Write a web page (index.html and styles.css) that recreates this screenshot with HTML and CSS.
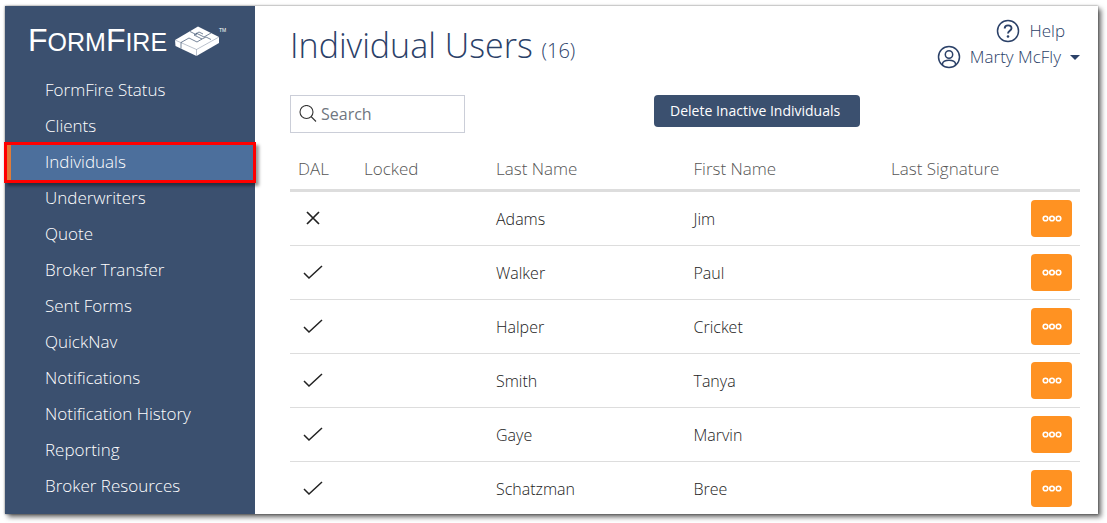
FILE: index.html
```html
<!DOCTYPE html>
<html lang="en">
<head>
  <meta charset="UTF-8">
  <title>FormFire - Individual Users</title>
  <meta name="viewport" content="width=device-width, initial-scale=1.0">
  <link rel="stylesheet" href="styles.css">
</head>
<body>

  <!-- Shared icons -->
  <svg class="sprite" aria-hidden="true">
    <symbol id="check" viewBox="0 0 20 16">
      <path d="M1 8l5 5L19 1" fill="none" stroke="currentColor" stroke-width="1.5"/>
    </symbol>
    <symbol id="cross" viewBox="0 0 20 16">
      <path d="M4 1l12 12M16 1L4 13" fill="none" stroke="currentColor" stroke-width="1.7"/>
    </symbol>
    <symbol id="dots" viewBox="0 0 20 8">
      <g fill="none" stroke="currentColor" stroke-width="1.6">
        <circle cx="3.5" cy="3.5" r="2.3"/>
        <circle cx="10" cy="3.5" r="2.3"/>
        <circle cx="16.5" cy="3.5" r="2.3"/>
      </g>
    </symbol>
  </svg>

  <div class="app">
    <!-- Sidebar -->
    <aside class="sidebar">
      <a class="logo" href="#">
        <span class="logo-text"><b>F</b>ORM<b>F</b>IRE</span>
        <svg class="logo-mark" viewBox="0 0 44 31" aria-hidden="true">
          <path d="M0 14L23 .5 44 11v6L21.500 30 .5 20z" fill="#fff"/>
          <g fill="none" stroke="#3b506f" stroke-width="0.700">
            <path d="M0 14l21.500 9.500L44 11M21.500 23.500V30" opacity="0.500"/>
            <path d="M6 16.500l8-4.500 8 4 5-3-8-4 5-3 4 2M6 16.500v6M36 7l-7 4-8-4M15 5.500l7 3.500M27 13l4-2 5 2.500"/>
          </g>
        </svg>
        <span class="tm">TM</span>
      </a>
      <nav class="nav">
        <a href="#">FormFire Status</a>
        <a href="#">Clients</a>
        <a class="active" href="#">Individuals</a>
        <a href="#">Underwriters</a>
        <a href="#">Quote</a>
        <a href="#">Broker Transfer</a>
        <a href="#">Sent Forms</a>
        <a href="#">QuickNav</a>
        <a href="#">Notifications</a>
        <a href="#">Notification History</a>
        <a href="#">Reporting</a>
        <a href="#">Broker Resources</a>
      </nav>
    </aside>

    <!-- Content -->
    <main class="main">
      <header class="header">
        <h1>Individual Users <small>(16)</small></h1>
        <div class="account">
          <a class="help" href="#">
            <svg class="icon" viewBox="0 0 24 24" aria-hidden="true">
              <g fill="none" stroke="currentColor" stroke-width="1.5">
                <circle cx="12" cy="12" r="10.5"/>
                <path d="M8.700 9.500c0-4.300 6.800-4 6.800-.3 0 2.500-3.500 2.600-3.500 5.300" stroke-width="1.900"/>
              </g>
              <circle cx="12" cy="17.500" r="1.300" fill="currentColor"/>
            </svg>
            Help
          </a>
          <button class="user" type="button">
            <svg class="icon" viewBox="0 0 24 24" aria-hidden="true">
              <g fill="none" stroke="currentColor" stroke-width="1.500">
                <circle cx="12" cy="12" r="10.500"/>
                <circle cx="12" cy="9.500" r="3.700"/>
                <path d="M5.500 20v-1.500c1-4.500 12-4.500 13 0V20"/>
              </g>
            </svg>
            Marty McFly
            <span class="caret"></span>
          </button>
        </div>
      </header>

      <div class="toolbar">
        <label class="search">
          <svg viewBox="0 0 18 18" aria-hidden="true">
            <g fill="none" stroke="currentColor" stroke-width="1.100">
              <circle cx="7.500" cy="7" r="6.500"/>
              <path d="M12 11.500l5 5"/>
            </g>
          </svg>
          <input type="text" placeholder="Search" aria-label="Search">
        </label>
        <button class="delete" type="button">Delete Inactive Individuals</button>
      </div>

      <table class="users">
        <thead>
          <tr>
            <th class="col-dal">DAL</th>
            <th class="col-locked">Locked</th>
            <th class="col-name">Last Name</th>
            <th class="col-name">First Name</th>
            <th colspan="2">Last Signature</th>
          </tr>
        </thead>
        <tbody>
          <tr>
            <td class="dal"><svg><use href="#cross"/></svg></td><td></td>
            <td>Adams</td><td>Jim</td><td></td>
            <td class="actions"><button type="button" aria-label="Actions"><svg><use href="#dots"/></svg></button></td>
          </tr>
          <tr>
            <td class="dal"><svg><use href="#check"/></svg></td><td></td>
            <td>Walker</td><td>Paul</td><td></td>
            <td class="actions"><button type="button" aria-label="Actions"><svg><use href="#dots"/></svg></button></td>
          </tr>
          <tr>
            <td class="dal"><svg><use href="#check"/></svg></td><td></td>
            <td>Halper</td><td>Cricket</td><td></td>
            <td class="actions"><button type="button" aria-label="Actions"><svg><use href="#dots"/></svg></button></td>
          </tr>
          <tr>
            <td class="dal"><svg><use href="#check"/></svg></td><td></td>
            <td>Smith</td><td>Tanya</td><td></td>
            <td class="actions"><button type="button" aria-label="Actions"><svg><use href="#dots"/></svg></button></td>
          </tr>
          <tr>
            <td class="dal"><svg><use href="#check"/></svg></td><td></td>
            <td>Gaye</td><td>Marvin</td><td></td>
            <td class="actions"><button type="button" aria-label="Actions"><svg><use href="#dots"/></svg></button></td>
          </tr>
          <tr>
            <td class="dal"><svg><use href="#check"/></svg></td><td></td>
            <td>Schatzman</td><td>Bree</td><td></td>
            <td class="actions"><button type="button" aria-label="Actions"><svg><use href="#dots"/></svg></button></td>
          </tr>
        </tbody>
      </table>
    </main>
  </div>

</body>
</html>
```

FILE: styles.css
```css
/* Reset / Basic setup */
* {
  margin: 0;
  padding: 0;
  box-sizing: border-box;
}

body {
  height: 100vh;
  padding: 6px 9px 9px 5px;
  background: #fff;
  font-family: "Open Sans", sans-serif;
  font-size: 16px;
  font-weight: 300;
  line-height: 24px;
  color: #222;
}

a {
  color: inherit;
  text-decoration: none;
}

button,
input {
  font: inherit;
  color: inherit;
  border: 0;
  background: none;
}

svg {
  display: block;
}

.sprite {
  display: none;
}

.app {
  display: flex;
  height: 100%;
  background: #fff;
  box-shadow: 0 0 2px rgba(0, 0, 0, 0.5), 3px 3px 5px rgba(0, 0, 0, 0.6);
}

/* Sidebar */
.sidebar {
  flex: 0 0 250px;
  background: #3b506f;
  color: #fff;
}

.logo {
  display: flex;
  align-items: flex-start;
  height: 66px;
  padding: 20px 0 0 23px;
  font-family: "Liberation Sans", Arial, sans-serif;
  font-weight: 400;
}

.logo-text {
  width: 147px;
  font-size: 25px;
  line-height: 28px;
}

.logo-text b {
  font-size: 32px;
  font-weight: 400;
}

.logo-mark {
  width: 44px;
  height: 31px;
}

.tm {
  font-size: 5px;
  line-height: 8px;
}

.nav a {
  display: block;
  height: 36px;
  padding-left: 40px;
  font-size: 17px;
  line-height: 36px;
}

.nav .active {
  position: relative;
  padding-left: 34px;
  border-left: 6px solid #e07b39;
  background: #4c6f9c;
}

/* Red highlight around the current item */
.nav .active::after {
  content: "";
  position: absolute;
  inset: -2px -1px -3px -7px;
  border: 3px solid #f00;
  box-shadow: 3px 3px 3px rgba(0, 0, 0, 0.4);
}

/* Content */
.main {
  flex: 1;
  min-width: 0;
  padding: 12px 18px 0 35px;
  overflow: hidden;
}

.header {
  display: flex;
  justify-content: space-between;
  height: 77px;
  color: #2b4168;
}

h1 {
  font-size: 34px;
  font-weight: 300;
  line-height: 54px;
}

h1 small {
  font-size: 20px;
}

.account {
  display: flex;
  flex-direction: column;
  align-items: flex-end;
  font-size: 17px;
}

.help,
.user {
  display: flex;
  align-items: center;
  gap: 9px;
  height: 26px;
}

.help {
  padding-right: 15px;
}

.icon {
  width: 24px;
  height: 24px;
}

.caret {
  border: 5px solid transparent;
  border-top-color: #2b4168;
  border-bottom: 0;
}

/* Search and delete */
.toolbar {
  display: grid;
  grid-template-columns: 364px 1fr;
  justify-items: start;
  align-items: start;
  height: 53px;
}

.search {
  display: flex;
  align-items: center;
  gap: 4px;
  width: 175px;
  height: 38px;
  padding: 0 8px;
  border: 1px solid #cbced8;
  color: #333;
}

.search svg {
  flex: none;
  width: 18px;
  height: 18px;
}

.search input {
  width: 100%;
  font-weight: 400;
  outline: 0;
}

.search input::placeholder {
  color: #6f7680;
}

.delete {
  height: 32px;
  padding: 0 20px 0 16px;
  border-radius: 4px;
  background: #3b506f;
  color: #fff;
  font-size: 14px;
  font-weight: 400;
}

/* Users table */
.users {
  width: 100%;
  table-layout: fixed;
  border-collapse: separate;
  border-spacing: 0;
}

.users th {
  height: 44px;
  padding: 0 8px;
  border-bottom: 3px solid #ddd;
  color: #555;
  font-size: 17px;
  font-weight: 300;
  text-align: left;
}

.users td {
  height: 54px;
  padding: 0 8px;
  border-bottom: 1px solid #ddd;
}

.col-dal {
  width: 66px;
}

.col-locked {
  width: 132px;
}

.col-name {
  width: 25%;
}

.dal svg {
  width: 20px;
  height: 16px;
  margin-left: 5px;
}

.actions button {
  display: grid;
  place-items: center;
  width: 41px;
  height: 37px;
  margin-left: auto;
  border-radius: 4px;
  background: #ff9222;
  color: #fff;
}

.actions svg {
  width: 20px;
  height: 8px;
}
```
